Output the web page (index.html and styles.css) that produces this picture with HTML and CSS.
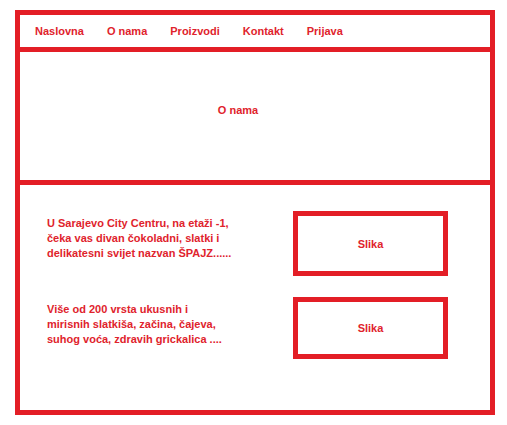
FILE: index.html
```html
<!DOCTYPE html>
<html lang="bs">
<head>
<meta charset="utf-8">
<title>ŠPAJZ</title>
<link rel="stylesheet" href="styles.css">
</head>
<body>
<div class="frame">
  <nav class="nav">
    <a class="nav-link" href="#">Naslovna</a>
    <a class="nav-link" href="#">O nama</a>
    <a class="nav-link" href="#">Proizvodi</a>
    <a class="nav-link" href="#">Kontakt</a>
    <a class="nav-link" href="#">Prijava</a>
  </nav>
  <section class="hero">O nama</section>
  <section class="content">
    <div class="row">
      <p class="text">U Sarajevo City Centru, na etaži -1,<br>čeka vas divan čokoladni, slatki i<br>delikatesni svijet nazvan ŠPAJZ......</p>
      <div class="pic pic-1">Slika</div>
    </div>
    <div class="row">
      <p class="text">Više od 200 vrsta ukusnih i<br>mirisnih slatkiša, začina, čajeva,<br>suhog voća, zdravih grickalica ....</p>
      <div class="pic pic-2">Slika</div>
    </div>
  </section>
</div>
</body>
</html>
```

FILE: styles.css
```css
html, body {
  margin: 0;
  padding: 0;
  background: #ffffff;
}

body {
  font-family: "Liberation Sans", Arial, sans-serif;
  font-weight: bold;
  font-size: 11px;
  color: #e0232c;
}

.frame {
  box-sizing: border-box;
  width: 480px;
  margin: 10px 0 0 15px;
  border: 5px solid #e31e26;
}

.nav {
  height: 32px;
  display: flex;
  align-items: center;
  padding-left: 15px;
  gap: 23px;
  border-bottom: 5px solid #e31e26;
}

.nav-link {
  color: #e0232c;
  text-decoration: none;
}

.hero {
  height: 116px;
  display: flex;
  align-items: center;
  justify-content: center;
  padding: 0 34px 12px 0;
  border-bottom: 5px solid #e31e26;
}

.content {
  height: 225px;
  box-sizing: border-box;
  padding-top: 26px;
  display: flex;
  flex-direction: column;
  gap: 21px;
}

.row {
  display: flex;
  align-items: flex-start;
}

.text {
  box-sizing: border-box;
  width: 273px;
  margin: 5px 0 0;
  padding-left: 27px;
  line-height: 15px;
}

.pic {
  box-sizing: border-box;
  width: 155px;
  border: 5px solid #e31e26;
  display: flex;
  align-items: center;
  justify-content: center;
}

.pic-1 {
  height: 65px;
}

.pic-2 {
  height: 62px;
}
```
